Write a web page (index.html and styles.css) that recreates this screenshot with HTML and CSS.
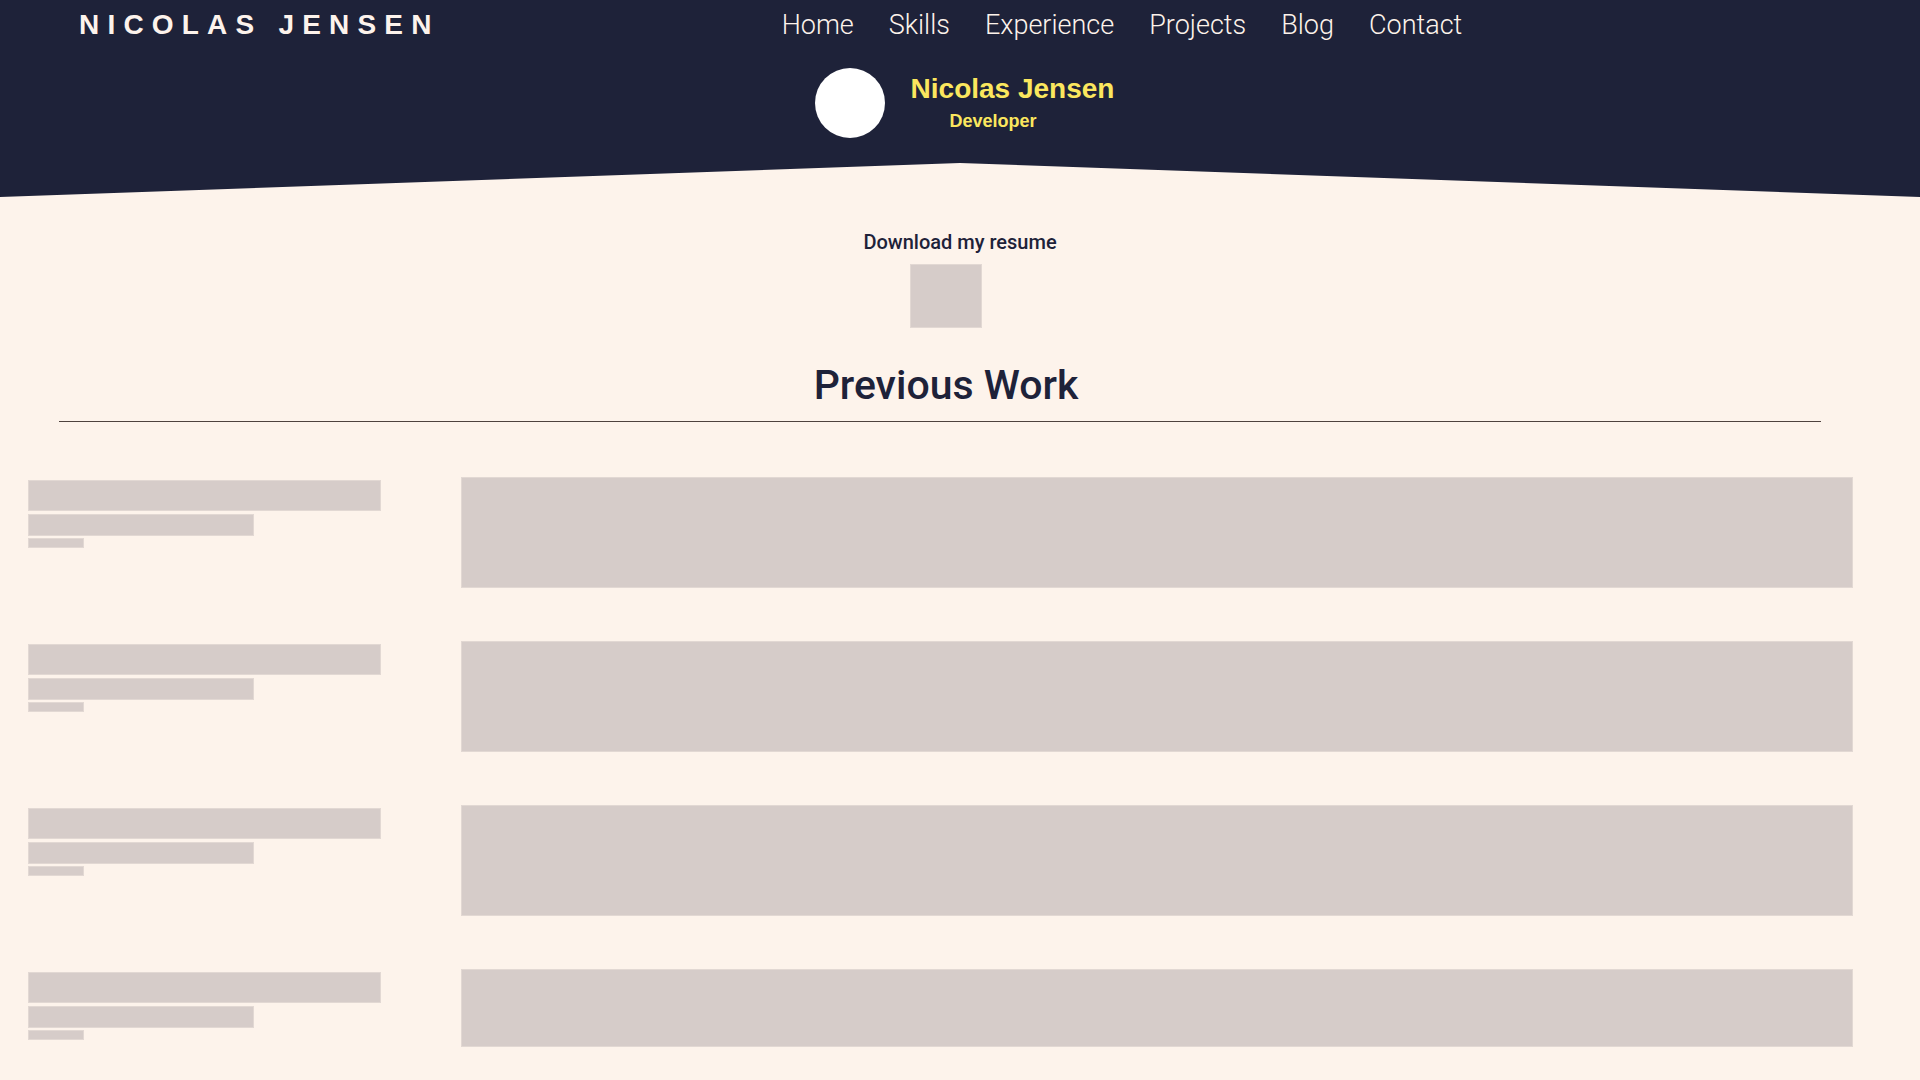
FILE: index.html
```html
<!DOCTYPE html>
<html lang="en">
<head>
<meta charset="utf-8">
<title>Nicolas Jensen</title>
<link rel="stylesheet" href="styles.css">
</head>
<body>
<header class="hero">
  <div class="topbar">
    <div class="logo">NICOLAS JENSEN</div>
    <nav class="nav">
      <a href="#">Home</a>
      <a href="#">Skills</a>
      <a href="#">Experience</a>
      <a href="#">Projects</a>
      <a href="#">Blog</a>
      <a href="#">Contact</a>
    </nav>
  </div>
  <div class="profile">
    <div class="avatar"></div>
    <div class="identity">
      <div class="name">Nicolas Jensen</div>
      <div class="role">Developer</div>
    </div>
  </div>
</header>
<main class="content">
  <section class="resume">
    <p class="resume-label">Download my resume</p>
    <div class="resume-thumb"></div>
  </section>
  <h1 class="section-title">Previous Work</h1>
  <hr class="divider">
  <div class="work-list">
    <div class="work-row">
      <div class="work-meta">
        <div class="sk sk-title"></div>
        <div class="sk sk-sub"></div>
        <div class="sk sk-date"></div>
      </div>
      <div class="sk work-body"></div>
    </div>
    <div class="work-row">
      <div class="work-meta">
        <div class="sk sk-title"></div>
        <div class="sk sk-sub"></div>
        <div class="sk sk-date"></div>
      </div>
      <div class="sk work-body"></div>
    </div>
    <div class="work-row">
      <div class="work-meta">
        <div class="sk sk-title"></div>
        <div class="sk sk-sub"></div>
        <div class="sk sk-date"></div>
      </div>
      <div class="sk work-body"></div>
    </div>
    <div class="work-row">
      <div class="work-meta">
        <div class="sk sk-title"></div>
        <div class="sk sk-sub"></div>
        <div class="sk sk-date"></div>
      </div>
      <div class="sk work-body work-body-short"></div>
    </div>
  </div>
</main>
</body>
</html>
```
FILE: styles.css
```css
* { box-sizing: border-box; }

html, body {
  margin: 0;
  padding: 0;
  background: #fdf3eb;
}

body {
  font-family: "Liberation Sans", Arial, sans-serif;
  color: #1e2239;
  min-height: 1080px;
}

/* ---------- hero ---------- */
.hero {
  background: #1e2239;
  height: 197px;
  clip-path: polygon(0 0, 100% 0, 100% 197px, 50% 163px, 0 197px);
  padding-top: 9px;
}

.topbar {
  display: flex;
  align-items: flex-start;
  padding-left: 79px;
}

.logo {
  font-family: "Liberation Sans", Arial, sans-serif;
  font-weight: 700;
  font-size: 28px;
  letter-spacing: 8.2px;
  color: #fdf3ec;
  line-height: 32px;
}

.nav {
  display: flex;
  gap: 35px;
  margin-left: 342px;
}

.nav a {
  font-family: "Roboto", "Liberation Sans", sans-serif;
  font-weight: 300;
  font-size: 27px;
  line-height: 33px;
  color: #fdf3eb;
  text-decoration: none;
}

.profile {
  display: flex;
  justify-content: center;
  align-items: center;
  gap: 26px;
  margin-top: 26px;
  padding-left: 9px;
}

.avatar {
  width: 70px;
  height: 70px;
  border-radius: 50%;
  background: #ffffff;
}

.identity {
  display: flex;
  flex-direction: column;
  gap: 6px;
  padding-bottom: 2px;
}

.name {
  font-weight: 700;
  font-size: 28px;
  line-height: 32px;
  color: #fbe75e;
}

.role {
  font-weight: 700;
  font-size: 18px;
  line-height: 21px;
  color: #fbe75e;
  margin-left: 39px;
}

/* ---------- content ---------- */
.content {
  padding-top: 33px;
}

.resume {
  display: flex;
  flex-direction: column;
  align-items: center;
}

.resume-label {
  margin: 0;
  font-family: "Roboto", "Liberation Sans", sans-serif;
  font-weight: 500;
  font-size: 20px;
  line-height: 24px;
  color: #1e2239;
}

.resume-thumb {
  width: 72px;
  height: 64px;
  margin-top: 10px;
  margin-right: 28px;
  background: #d6ccc9;
  border: 1px solid #e2d8d3;
}

.section-title {
  margin: 33px 28px 0 0;
  text-align: center;
  font-family: "Roboto", "Liberation Sans", sans-serif;
  font-weight: 500;
  font-size: 41px;
  line-height: 49px;
  color: #1e2239;
}

.divider {
  margin: 11px 99px 0 59px;
  border: 0;
  height: 1px;
  background: #4e423e;
}

.work-list {
  display: flex;
  flex-direction: column;
  gap: 53px;
  padding: 55px 67px 0 28px;
}

.work-row {
  display: flex;
  align-items: flex-start;
  gap: 80px;
}

.sk {
  background: #d6ccc9;
  border: 1px solid #e2d8d3;
}

.work-meta {
  width: 353px;
  flex: none;
  display: flex;
  flex-direction: column;
  padding-top: 3px;
}

.sk-title {
  width: 353px;
  height: 31px;
}

.sk-sub {
  width: 226px;
  height: 22px;
  margin-top: 3px;
}

.sk-date {
  width: 56px;
  height: 10px;
  margin-top: 2px;
}

.work-body {
  flex: 1;
  height: 111px;
}

.work-body-short {
  height: 78px;
}
```
